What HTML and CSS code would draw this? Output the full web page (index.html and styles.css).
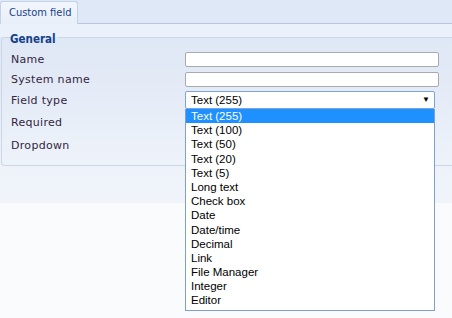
FILE: index.html
```html
<!DOCTYPE html>
<html lang="en">
<head>
    <meta charset="UTF-8">
    <title>Custom field</title>
    <link rel="stylesheet" href="styles.css">
</head>
<body>
    <div class="panel">
        <div class="tabbar">
            <div class="tab">Custom field</div>
        </div>

        <fieldset class="group">
            <legend>General</legend>
            <div class="row row-input">
                <label>Name</label>
                <input type="text" class="field">
            </div>
            <div class="row row-input">
                <label>System name</label>
                <input type="text" class="field">
            </div>
            <div class="row row-select">
                <label>Field type</label>
                <div class="select">
                    <div class="select-value">Text (255)<span class="arrow">&#9660;</span></div>
                    <ul class="options">
                        <li class="selected">Text (255)</li>
                        <li>Text (100)</li>
                        <li>Text (50)</li>
                        <li>Text (20)</li>
                        <li>Text (5)</li>
                        <li>Long text</li>
                        <li>Check box</li>
                        <li>Date</li>
                        <li>Date/time</li>
                        <li>Decimal</li>
                        <li>Link</li>
                        <li>File Manager</li>
                        <li>Integer</li>
                        <li>Editor</li>
                    </ul>
                </div>
            </div>
            <div class="row row-required">
                <label>Required</label>
            </div>
            <div class="row row-dropdown">
                <label>Dropdown</label>
            </div>
        </fieldset>
    </div>
</body>
</html>
```

FILE: styles.css
```css
html {
    height: 100%;
}

body {
    margin: 0;
    min-height: 100%;
    background-color: #fafbfd;
    font-family: "DejaVu Sans", Verdana, sans-serif;
    font-size: 11px;
    color: #33263f;
}

.panel {
    height: 203px;
    background: linear-gradient(#dfe8f6 0px, #dfe8f6 24px, #eaf1fa 24px, #eaf1fa 37px,
                                #dfe8f6 37px, #e3eaf6 80px, #eef3fa 165px, #f0f4fa 203px);
}

.tabbar {
    height: 24px;
    border-bottom: 1px solid #b7c7dd;
    box-sizing: border-box;
    padding-top: 1px;
}

.tab {
    width: 78px;
    height: 23px;
    box-sizing: border-box;
    border: 1px solid #c4d2e6;
    border-bottom: none;
    border-radius: 3px 3px 0 0;
    background: linear-gradient(#f2f6fc, #e8eff9);
    color: #15428b;
    font-family: "DejaVu Sans Condensed", "DejaVu Sans", sans-serif;
    font-size: 11px;
    line-height: 22px;
    padding-left: 8px;
}

.group {
    margin: 5px 0 0 1px;
    padding: 4px 0 8px 9px;
    border: 1px solid #cbd6e7;
    border-right: none;
    border-radius: 4px 0 0 4px;
    min-width: 0;
}

.group legend {
    padding: 4px 2px 0 0;
    margin-left: -1px;
    color: #15428b;
    font-family: "DejaVu Sans Condensed", "DejaVu Sans", sans-serif;
    font-weight: bold;
    font-size: 11.5px;
    line-height: 12px;
}

.row {
    display: flex;
    align-items: center;
}

.row label {
    width: 174px;
    flex-shrink: 0;
    letter-spacing: 0.3px;
}

.row-input {
    height: 20px;
}

.row-select {
    height: 22px;
}

.row-required {
    height: 22px;
}

.row-dropdown {
    height: 24px;
}

.field {
    width: 254px;
    height: 15px;
    box-sizing: border-box;
    border: 1px solid #a9a9b0;
    border-radius: 2px;
    background: #fff;
    margin: 0;
    padding: 0;
}

.select {
    position: relative;
    width: 250px;
}

.select-value {
    height: 18px;
    box-sizing: border-box;
    border: 1px solid #7ea3d6;
    border-radius: 2px;
    background: #fff;
    font-family: "Liberation Sans", Arial, sans-serif;
    font-size: 11.5px;
    line-height: 16px;
    padding-left: 5px;
    color: #000;
    position: relative;
}

.arrow {
    position: absolute;
    right: 4px;
    top: 0;
    font-size: 8px;
    line-height: 16px;
}

.options {
    position: absolute;
    top: 18px;
    left: 0;
    width: 250px;
    box-sizing: border-box;
    margin: 0;
    padding: 0 0 2px;
    list-style: none;
    border: 1px solid #7f9fce;
    border-top: none;
    background: #fff;
    font-family: "Liberation Sans", Arial, sans-serif;
    font-size: 11.5px;
    color: #000;
    z-index: 2;
}

.options li {
    height: 14.2px;
    line-height: 14px;
    padding-left: 5px;
}

.options .selected {
    background-color: #1e90ff;
    color: #fff;
}
```
